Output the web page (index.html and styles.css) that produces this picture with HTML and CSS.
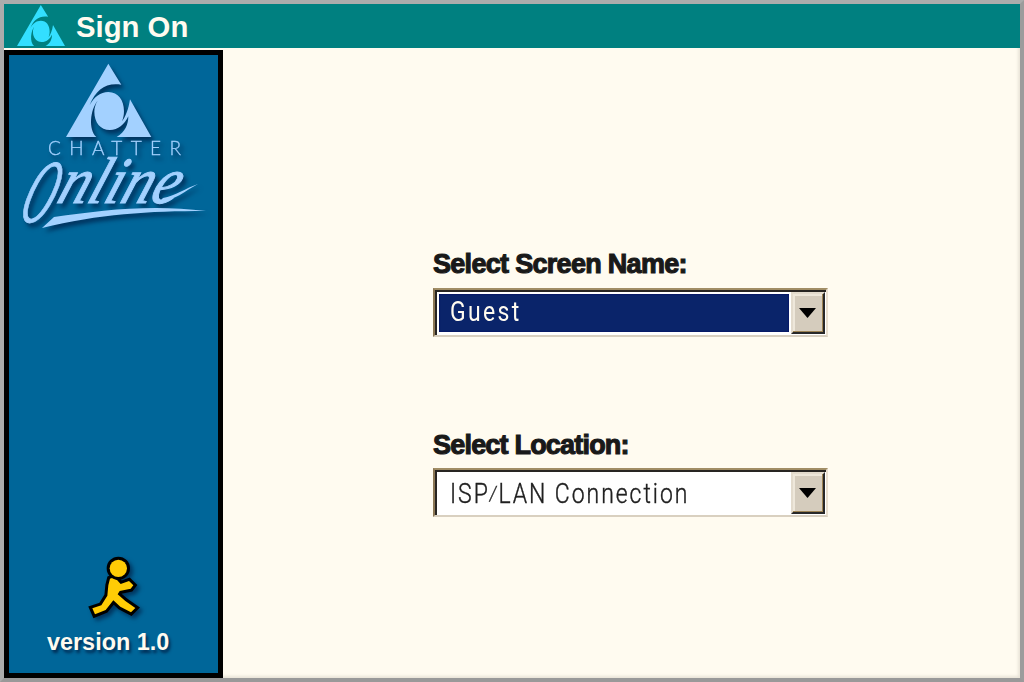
FILE: index.html
```
<!DOCTYPE html>
<html lang="en">
<head>
<meta charset="utf-8">
<title>Sign On</title>
<link rel="stylesheet" href="styles.css">
</head>
<body>
<div class="window">
  <header class="titlebar">
    <svg class="title-logo" viewBox="6 11 256 220" preserveAspectRatio="none"><use href="#mark"/></svg>
    <h1 class="title">Sign On</h1>
  </header>
  <div class="body">
    <aside class="sidebar">
      <svg class="brand" viewBox="9 55 209 185" width="209" height="185">
        <defs>
          <g id="mark">
            <path d="M133 11L172 74C126 67 96 88 77 135C91 111 109 96 133 96C163 96 180 121 180 153C180 165 178 175 174 184C184 172 194 147 198 118L262 231H158C184 217 193 192 193 169C181 194 162 210 138 210C109 210 91 187 91 155C91 144 95 130 101 122C78 150 73 209 97 231H6Z"/>
          </g>
        </defs>
        <g class="brand-art">
          <g transform="translate(64 60) scale(.3333)"><use href="#mark"/></g>
          <text class="chatter" x="48" y="155" textLength="133">CHATTER</text>
          <text class="online" transform="translate(16 222) skewX(-20)"><tspan class="online-o" x="0" y="0" textLength="31" lengthAdjust="spacingAndGlyphs">O</tspan><tspan x="32" y="-19" textLength="120" lengthAdjust="spacingAndGlyphs">nline</tspan></text>
          <path d="M160 201C174 201 185 191 198 184C186 188 175 196 163 198Z"/>
          <path d="M42 228L54 217C101 210 152 204 206 211C149 211 99 214 42 228Z"/>
        </g>
      </svg>
      <div class="footer">
        <svg class="runner" viewBox="0 0 180 210" width="60" height="70">
          <path d="M75 80Q85 75 96 84L107 96L132 87L145 100L137 110L104 117L98 127L121 147L151 168L138 181L106 164L85 145L62 174L30 187L22 169L49 160L67 131L70 100Z"/>
          <circle cx="100" cy="49" r="26"/>
        </svg>
        <p class="version">version 1.0</p>
      </div>
    </aside>
    <main class="form">
      <div class="field">
        <div class="label">Select Screen Name:</div>
        <div class="select">
          <div class="value selected"><span class="guest">Guest</span></div>
          <button class="drop" aria-label="Choose screen name"><svg viewBox="0 0 17 10" width="17" height="10"><path d="M0 0H17L8.5 10Z"/></svg></button>
        </div>
      </div>
      <div class="field">
        <div class="label location">Select Location:</div>
        <div class="select">
          <div class="value"><span class="isp">ISP<i class="slash">/</i>LAN Connection</span></div>
          <button class="drop" aria-label="Choose location"><svg viewBox="0 0 17 10" width="17" height="10"><path d="M0 0H17L8.5 10Z"/></svg></button>
        </div>
      </div>
    </main>
  </div>
</div>
</body>
</html>
```
FILE: styles.css
```
* { box-sizing: border-box; }
body { margin: 0; font-family: "Liberation Sans", Arial, sans-serif; }
.window {
  width: 1024px; height: 682px;
  display: flex; flex-direction: column;
  border: 4px solid; border-color: #acacac #9c9c9c #999 #acacac;
  background: #fffbf0;
}
.titlebar {
  height: 44px; flex: none;
  display: flex; align-items: flex-start;
  padding-left: 13px;
  background: #008080;
}
.title-logo { width: 48px; height: 41px; margin-top: 1px; fill: #33dfff; }
.title { margin: 6px 0 0 11px; font-size: 29.3px; line-height: 34px; color: #fffbf0; }
.body { flex: 1; display: flex; padding-top: 2px; box-shadow: inset -3px -3px 3px -1px #e9e4d8; }
.sidebar {
  width: 219px;
  display: flex; flex-direction: column; justify-content: space-between;
  border: 5px solid #000;
  background: #006699;
}
.brand { display: block; }
.brand-art { fill: #a3d1ff; filter: drop-shadow(3px 4px 2px rgba(0, 25, 65, .65)); }
.chatter { font-family: Lato, sans-serif; font-weight: 300; font-size: 19px; stroke: #a3d1ff; stroke-width: .3px; }
.online { font-family: "Liberation Serif", serif; font-style: italic; font-size: 66px; stroke: #a3d1ff; stroke-width: 1px; }
.online-o { font-size: 90px; }
.footer { display: flex; flex-direction: column; height: 121px; }
.runner {
  margin-left: 76px;
  fill: #ffcc05; stroke: #000; stroke-width: 18px; stroke-linejoin: miter; paint-order: stroke;
  filter: drop-shadow(3px 3px 2px rgba(0, 20, 55, .6));
}
.version {
  margin: 6px 0 0 38px;
  font-size: 23.4px; font-weight: bold; line-height: 28px; white-space: nowrap;
  color: #fffbf0; text-shadow: 2px 3px 3px rgba(0, 20, 55, .7);
}
.form { display: flex; flex-direction: column; gap: 91px; padding: 198px 0 0 210px; }
.field { width: 395px; }
.label {
  height: 40px; line-height: 33px;
  font-size: 27px; font-weight: bold; letter-spacing: -.7px; white-space: nowrap;
  color: #191919; -webkit-text-stroke: 1.1px #191919;
}
.location { line-height: 34px; letter-spacing: -.8px; }
.select {
  display: flex; width: 395px; height: 49px;
  border: 2px solid; border-color: #a18d65 #e9dfcf #d9d0c0 #8d7856;
  background: #fff;
  box-shadow: inset 2px 2px #282522;
}
.value {
  flex: 1; margin: 4px 2px 3px 4px; padding-left: 11px;
  font: 300 28px/40px Roboto, sans-serif; color: #202020;
}
.selected { background: #0a246a; box-shadow: inset 0 0 2px #000060; color: #fffbf0; line-height: 36px; }
.value span { display: inline-block; transform: scaleX(.82); transform-origin: left; white-space: nowrap; font-weight: 400; }
.guest { letter-spacing: 2.9px; }
.isp { letter-spacing: 2.4px; }
.value .isp { font-weight: 300; -webkit-text-stroke: .4px #202020; }
.slash { font-size: 21px; vertical-align: 2px; }
.drop {
  width: 34px; margin: 2px 1px 1px 0; padding: 0 1px 0 0;
  display: flex; align-items: center; justify-content: center;
  border: 2px solid; border-color: #e3dbcd #282828 #282828 #e3dbcd;
  background: #d5ccbd; box-shadow: inset -1px -1px #9c8253, inset 2px 2px #eee7da;
}
```
